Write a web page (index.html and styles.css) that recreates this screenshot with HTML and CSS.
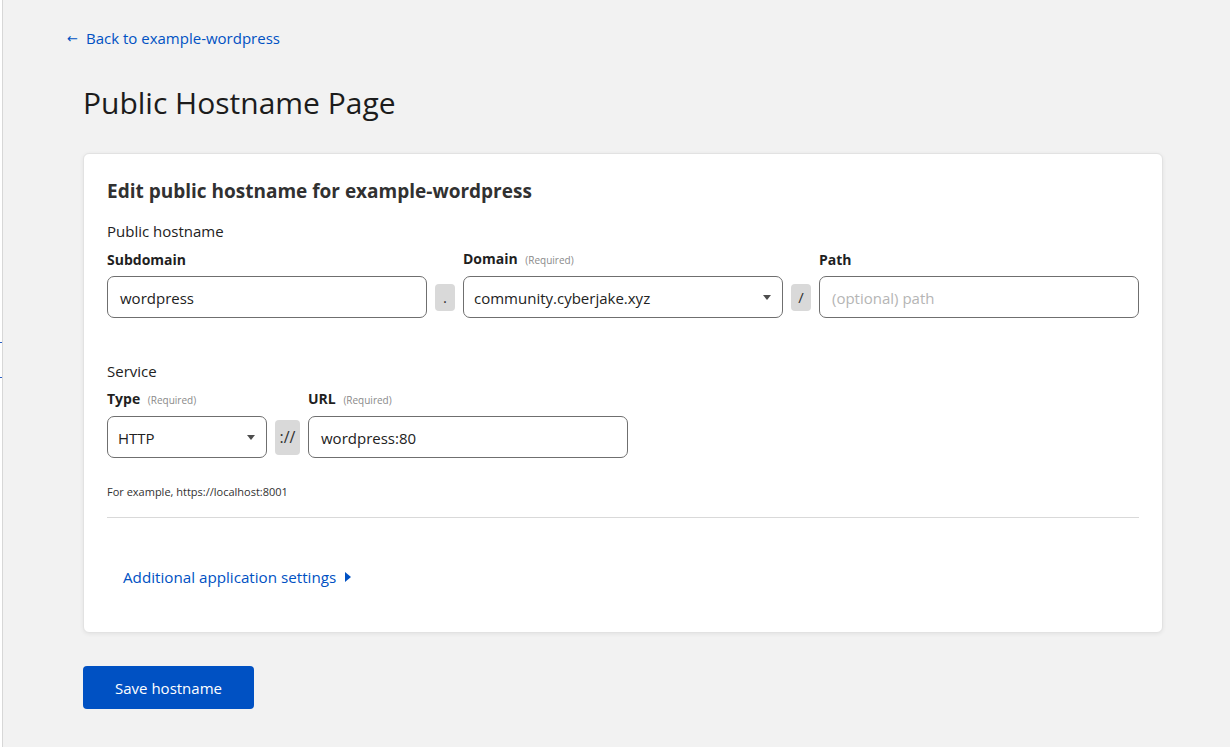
FILE: index.html
```html
<!DOCTYPE html>
<html lang="en">
<head>
<meta charset="utf-8">
<title>Public Hostname Page</title>
<link rel="stylesheet" href="styles.css">
</head>
<body>
<div class="edge"><span class="mark mark-1"></span><span class="mark mark-2"></span></div>
<main class="main">
  <a class="back" href="#"><span class="arrow">←</span>Back to example-wordpress</a>
  <h1 class="page-title">Public Hostname Page</h1>

  <section class="card">
    <h2 class="card-title">Edit public hostname for example-wordpress</h2>

    <div class="group-label first">Public hostname</div>
    <div class="grid grid-host">
      <div class="label">Subdomain</div>
      <div class="label col-3">Domain <span class="req">(Required)</span></div>
      <div class="label col-5">Path</div>

      <div class="input"><span class="value">wordpress</span></div>
      <div class="sep sep-small">.</div>
      <div class="input select"><span class="value">community.cyberjake.xyz</span><span class="caret"></span></div>
      <div class="sep sep-small">/</div>
      <div class="input"><span class="placeholder">(optional) path</span></div>
    </div>

    <div class="group-label service">Service</div>
    <div class="grid grid-service">
      <div class="label">Type <span class="req">(Required)</span></div>
      <div class="label col-3">URL <span class="req">(Required)</span></div>

      <div class="input select"><span class="value">HTTP</span><span class="caret"></span></div>
      <div class="sep sep-tall">://</div>
      <div class="input"><span class="value">wordpress:80</span></div>
    </div>

    <p class="hint">For example, https://localhost:8001</p>
    <hr class="divider">

    <a class="more" href="#">Additional application settings<span class="caret-right"></span></a>
  </section>

  <button class="save" type="button">Save hostname</button>
</main>
</body>
</html>
```
FILE: styles.css
```css
* { box-sizing: border-box; }

html, body { height: 100%; }

body {
  margin: 0;
  display: flex;
  background: #f2f2f2;
  font-family: "Open Sans", "Noto Sans", sans-serif;
  color: #222;
  font-size: 15px;
}

.edge {
  position: relative;
  width: 3px;
  flex: 0 0 3px;
  background: #ffffff;
  border-right: 1px solid #d7d7d7;
}

.mark {
  position: absolute;
  left: 0;
  width: 2px;
  height: 1px;
  background: #2a5fc4;
}
.mark-1 { top: 342px; }
.mark-2 { top: 377px; }

.main {
  flex: 1;
  padding: 28px 0 0 80px;
}

.back {
  display: flex;
  align-items: center;
  height: 20px;
  margin-left: -16px;
  line-height: 20px;
  font-size: 15px;
  color: #0051c3;
  text-decoration: none;
}

.arrow {
  display: inline-block;
  width: 19px;
  line-height: 1;
  font-family: "DejaVu Sans", sans-serif;
  font-size: 13px;
}

.page-title {
  margin: 35px 0 0;
  font-size: 30px;
  line-height: 40px;
  font-weight: 400;
  color: #1c1c1c;
}

.card {
  width: 1080px;
  margin-top: 30px;
  padding: 24px 23px 23px;
  background: #fff;
  border: 1px solid #e2e2e2;
  border-radius: 6px;
  box-shadow: 0 1px 4px rgba(0, 0, 0, 0.07);
}

.card-title {
  margin: 0;
  font-size: 19px;
  line-height: 26px;
  font-weight: 700;
  color: #313131;
}

.group-label {
  font-size: 15px;
  line-height: 20px;
  color: #222;
}
.group-label.first { margin-top: 17px; }
.group-label.service { margin-top: 43px; }

.grid {
  display: grid;
  column-gap: 8px;
  row-gap: 6px;
  margin-top: 8px;
  align-items: center;
}
.grid-host { grid-template-columns: 320px 20px 320px 20px 320px; }
.grid-service { grid-template-columns: 160px 25px 320px; }

.label {
  font-size: 14px;
  line-height: 20px;
  font-weight: 700;
  color: #1f1f1f;
  white-space: nowrap;
}
.col-3 { grid-column: 3; }
.col-5 { grid-column: 5; }

.req {
  margin-left: 4px;
  font-size: 10px;
  font-weight: 400;
  color: #8a8a8a;
}

.input {
  display: flex;
  align-items: center;
  height: 42px;
  padding: 1px 12px 0;
  border: 1px solid #6f6f6f;
  border-radius: 7px;
  background: #fff;
  font-size: 15px;
  line-height: 20px;
  color: #222;
}

.select {
  justify-content: space-between;
  padding: 1px 10px 0;
}

.placeholder { color: #b5b5b5; }

.caret {
  width: 0;
  height: 0;
  border-left: 4px solid transparent;
  border-right: 4px solid transparent;
  border-top: 5px solid #4d4d4d;
  margin-right: 1px;
}

.sep {
  display: flex;
  align-items: center;
  justify-content: center;
  background: #d9d9d9;
  border-radius: 4px;
  font-size: 15px;
  color: #313131;
}
.sep-small { height: 27px; }
.sep-tall { height: 35px; font-size: 16px; }

.hint {
  margin: 26px 0 0;
  font-size: 11px;
  line-height: 16px;
  color: #313131;
}

.divider {
  margin: 17px 0 0;
  border: 0;
  border-top: 1px solid #d9d9d9;
}

.more {
  display: flex;
  align-items: center;
  margin: 49px 0 22px;
  padding-left: 16px;
  line-height: 20px;
  font-size: 15.2px;
  color: #0051c3;
  text-decoration: none;
}

.caret-right {
  width: 0;
  height: 0;
  margin-left: 9px;
  border-top: 5px solid transparent;
  border-bottom: 5px solid transparent;
  border-left: 6px solid #0051c3;
}

.save {
  display: block;
  width: 171px;
  height: 43px;
  margin-top: 33px;
  padding: 1px 0 0;
  border: 0;
  border-radius: 4px;
  background: #0051c3;
  color: #fff;
  font-family: "Open Sans", "Noto Sans", sans-serif;
  font-size: 15px;
  line-height: 20px;
}
```
